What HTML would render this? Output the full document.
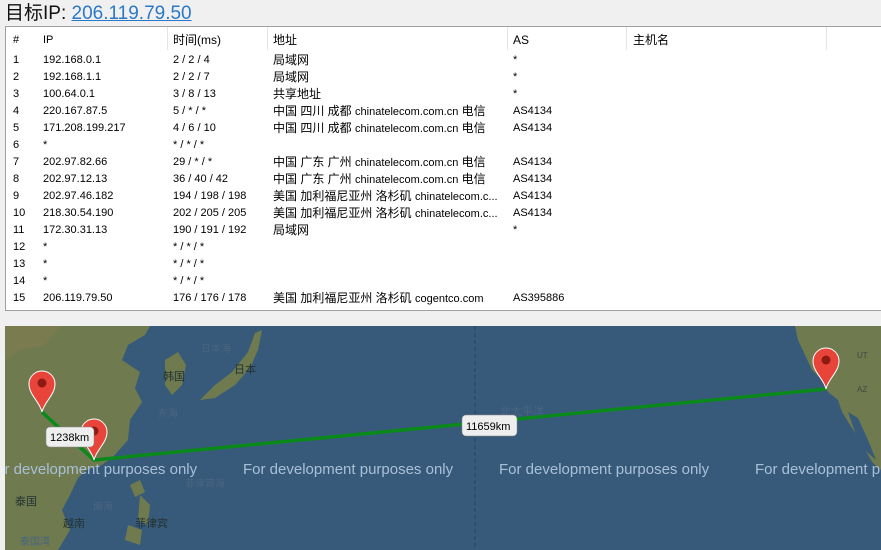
<!DOCTYPE html>
<html><head><meta charset="utf-8">
<style>
*{margin:0;padding:0;box-sizing:border-box}
body{width:881px;height:550px;background:#f0f0f0;position:relative;overflow:hidden;font-family:"Liberation Sans","Noto Sans CJK SC",sans-serif;color:#000}
.title{position:absolute;left:5px;top:2px;font-size:19px;line-height:24px;color:#111}
.title a{color:#2a78c8;text-decoration:underline}
.box{position:absolute;left:5px;top:26px;width:880px;height:285px;background:#fff;border:1px solid #a0a0a0;border-right:none}
.c{position:absolute;font-size:11px;line-height:17px;white-space:nowrap}
.cj{font-size:12px}
.sep{position:absolute;top:0;width:1px;height:23px;background:#e5e5e5}
.map{position:absolute;left:5px;top:326px;width:876px;height:224px;overflow:hidden;background:#375a7a}
</style></head><body>
<div class="title">目标IP: <a>206.119.79.50</a></div>
<div class="box">
<div class="sep" style="left:161px"></div><div class="sep" style="left:261px"></div><div class="sep" style="left:501px"></div><div class="sep" style="left:620px"></div><div class="sep" style="left:820px"></div>
<div id="rows"></div>
</div>
<div class="map">
<svg width="876" height="224" viewBox="5 326 876 224" style="position:absolute;left:0;top:0">
<polygon fill="#6f7a4f" points="5,326 150,326 145,335 128,345 122,360 140,372 135,388 142,402 130,420 128,440 112,458 100,466 86,470 78,478 70,495 62,510 70,530 58,550 5,550"/>
<polygon fill="#7a7c50" points="5,326 60,326 45,345 20,350 5,360"/>
<polygon fill="#6f7a4f" points="165,360 178,352 186,365 182,385 172,395 165,385"/>
<polygon fill="#6f7a4f" points="200,400 215,385 232,372 248,352 255,333 262,330 258,350 250,368 235,385 215,398"/>
<polygon fill="#6f7a4f" points="130,485 140,480 145,492 135,497"/>
<polygon fill="#6f7a4f" points="140,495 150,505 148,525 138,520"/>
<polygon fill="#6f7a4f" points="128,525 142,530 140,545 125,540"/>
<polygon fill="#6f7a4f" points="795,326 881,326 881,470 872,462 860,440 850,425 842,412 838,400 828,392 822,380 812,370 805,355 798,340"/>
<polygon fill="#375a7a" points="848,412 858,418 868,440 876,460 865,450 855,432"/>
<line x1="475" y1="326" x2="475" y2="550" stroke="#2c4a66" stroke-width="1.5" stroke-dasharray="4,3"/>
<polyline points="42,412 94,460 826,389" fill="none" stroke="#0a8a1a" stroke-width="3.5"/>
<g font-size="10" fill="#233" font-family="Noto Sans CJK SC,sans-serif">
<text x="163" y="380" font-size="11">韩国</text><text x="234" y="373" font-size="11">日本</text>
<text x="201" y="352" fill="#4a6580">日本海</text><text x="158" y="417" fill="#4a6580">东海</text>
<text x="185" y="487" fill="#4a6580">菲律宾海</text><text x="93" y="510" fill="#4a6580">南海</text>
<text x="15" y="505" font-size="11">泰国</text><text x="63" y="527" font-size="11">越南</text><text x="135" y="527" font-size="11">菲律宾</text>
<text x="20" y="545" fill="#4a6580">泰国湾</text><text x="500" y="415" fill="#4a6580" font-size="11">北太平洋</text>
<text x="857" y="358" font-family="Liberation Sans" fill="#444" font-size="8">UT</text><text x="857" y="392" font-family="Liberation Sans" fill="#444" font-size="8">AZ</text>
</g>
<g font-size="15" fill="#a9c0d8" font-family="Liberation Sans,sans-serif">
<text x="-13" y="474">For development purposes only</text>
<text x="243" y="474">For development purposes only</text>
<text x="499" y="474">For development purposes only</text>
<text x="755" y="474">For development purposes only</text>
</g>
<g id="pins"></g>
<g font-family="Liberation Sans,sans-serif" font-size="11">
<rect x="46" y="427" width="48" height="20" rx="4" fill="#eee" stroke="#888" stroke-width="0.5"/>
<text x="50" y="441">1238km</text>
<rect x="462" y="415" width="55" height="21" rx="4" fill="#eee" stroke="#888" stroke-width="0.5"/>
<text x="466" y="430">11659km</text>
</g>
</svg>
</div>
<script>
var pins=[[42,412],[94,460],[826,389]],g='';
pins.forEach(function(p){var x=p[0],y=p[1];
g+='<path d="M'+x+' '+y+' C'+(x-2)+' '+(y-10)+' '+(x-13)+' '+(y-17)+' '+(x-13)+' '+(y-28)+' A13 13 0 1 1 '+(x+13)+' '+(y-28)+' C'+(x+13)+' '+(y-17)+' '+(x+2)+' '+(y-10)+' '+x+' '+y+'Z" fill="#e8443a" stroke="#fff" stroke-width="1"/><circle cx="'+x+'" cy="'+(y-29)+'" r="4.5" fill="#8e1a14"/>';});
document.getElementById('pins').innerHTML=g;
var d=[["#","IP","时间(ms)","地址","AS","主机名"],
["1","192.168.0.1","2 / 2 / 4","局域网","*"],
["2","192.168.1.1","2 / 2 / 7","局域网","*"],
["3","100.64.0.1","3 / 8 / 13","共享地址","*"],
["4","220.167.87.5","5 / * / *","中国 四川 成都 <span style='font-size:11px'>chinatelecom.com.cn</span> 电信","AS4134"],
["5","171.208.199.217","4 / 6 / 10","中国 四川 成都 <span style='font-size:11px'>chinatelecom.com.cn</span> 电信","AS4134"],
["6","*","* / * / *","",""],
["7","202.97.82.66","29 / * / *","中国 广东 广州 <span style='font-size:11px'>chinatelecom.com.cn</span> 电信","AS4134"],
["8","202.97.12.13","36 / 40 / 42","中国 广东 广州 <span style='font-size:11px'>chinatelecom.com.cn</span> 电信","AS4134"],
["9","202.97.46.182","194 / 198 / 198","美国 加利福尼亚州 洛杉矶 <span style='font-size:11px'>chinatelecom.c...</span>","AS4134"],
["10","218.30.54.190","202 / 205 / 205","美国 加利福尼亚州 洛杉矶 <span style='font-size:11px'>chinatelecom.c...</span>","AS4134"],
["11","172.30.31.13","190 / 191 / 192","局域网","*"],
["12","*","* / * / *","",""],
["13","*","* / * / *","",""],
["14","*","* / * / *","",""],
["15","206.119.79.50","176 / 176 / 178","美国 加利福尼亚州 洛杉矶 <span style='font-size:11px'>cogentco.com</span>","AS395886"]];
var xs=[7,37,167,267,507,627],h='';
d.forEach(function(r,i){var top=i==0?5:25+(i-1)*17;
r.forEach(function(t,j){h+='<div class="c'+((j==3||(i==0&&j>=2))?' cj':'')+'" style="left:'+xs[j]+'px;top:'+top+'px">'+t+'</div>';});});
document.getElementById('rows').innerHTML=h;
</script>
</body></html>
